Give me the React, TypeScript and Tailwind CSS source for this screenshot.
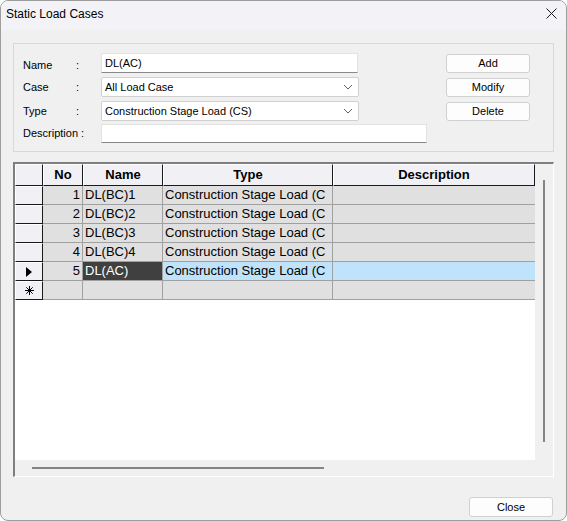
import React from "react";

type Row = { no: number; name: string; type: string; desc: string };

const rows: Row[] = [
  { no: 1, name: "DL(BC)1", type: "Construction Stage Load (C", desc: "" },
  { no: 2, name: "DL(BC)2", type: "Construction Stage Load (C", desc: "" },
  { no: 3, name: "DL(BC)3", type: "Construction Stage Load (C", desc: "" },
  { no: 4, name: "DL(BC)4", type: "Construction Stage Load (C", desc: "" },
  { no: 5, name: "DL(AC)", type: "Construction Stage Load (C", desc: "" },
];

const SELECTED = 5;

function Chevron() {
  return (
    <svg width="10" height="6" viewBox="0 0 10 6" className="shrink-0">
      <path d="M1 1 L5 5 L9 1" fill="none" stroke="#606060" strokeWidth="1" />
    </svg>
  );
}

function FieldRow({
  label,
  colon = true,
  labelClass = "",
  children,
  className = "",
}: {
  label: string;
  colon?: boolean;
  labelClass?: string;
  children: React.ReactNode;
  className?: string;
}) {
  return (
    <div className={`flex items-center ${className}`}>
      {colon ? (
        <>
          <span className={`w-[53px] ${labelClass}`}>{label}</span>
          <span className={`w-[25px] ${labelClass}`}>:</span>
        </>
      ) : (
        <span className={`w-[78px] ${labelClass}`}>{label}</span>
      )}
      {children}
    </div>
  );
}

function WinButton({ children, className = "" }: { children: React.ReactNode; className?: string }) {
  return (
    <button
      type="button"
      className={`flex items-center justify-center rounded-[3px] border border-[#d0d0d0] bg-[#fdfdfd] text-[11px] text-black ${className}`}
    >
      {children}
    </button>
  );
}

function HeaderCell({ w, children }: { w: string; children?: React.ReactNode }) {
  return (
    <div
      className={`${w} flex h-full items-center justify-center border-t border-l border-t-white border-l-white border-r border-b border-r-[#1a1a1a] border-b-[#1a1a1a] bg-[#f0f0f5] font-bold`}
    >
      {children}
    </div>
  );
}

function RowHeader({ marker }: { marker?: "current" | "new" }) {
  return (
    <div className="flex h-full w-[28px] items-center justify-center border-t border-l border-t-white border-l-white border-r border-b border-r-[#1a1a1a] border-b-[#1a1a1a] bg-[#f0f0f5]">
      {marker === "current" && (
        <svg width="6" height="10" viewBox="0 0 6 10">
          <polygon points="0,0 6,5 0,10" fill="#000" />
        </svg>
      )}
      {marker === "new" && (
        <svg width="9" height="9" viewBox="0 0 9 9">
          <g stroke="#000" strokeWidth="1">
            <line x1="4.5" y1="0" x2="4.5" y2="9" />
            <line x1="0" y1="4.5" x2="9" y2="4.5" />
            <line x1="1.3" y1="1.3" x2="7.7" y2="7.7" />
            <line x1="7.7" y1="1.3" x2="1.3" y2="7.7" />
          </g>
        </svg>
      )}
    </div>
  );
}

export default function App() {
  return (
    <div className="h-[521px] w-[567px] overflow-hidden rounded-[8px] border border-[#9e9e9e] bg-[#f0f0f0] font-['Liberation_Sans',Arial,sans-serif] text-black">
      <div className="flex h-[29px] items-center justify-between bg-[#f3f3f7] pb-[4px] pl-[5px] pr-[9px]">
        <span className="text-[12px]">Static Load Cases</span>
        <svg width="11" height="11" viewBox="0 0 11 11">
          <path d="M0.5 0.5 L10.5 10.5 M10.5 0.5 L0.5 10.5" stroke="#1a1a1a" strokeWidth="1" />
        </svg>
      </div>

      <div className="px-[12px] pt-[13px]">
        <div className="flex h-[109px] w-[541px] border border-[#d8d8d8] pl-[9px] pt-[9px] text-[11px]">
          <div className="flex w-[404px] flex-col">
            <FieldRow label="Name" labelClass="pt-[4px]" className="h-[20px]">
              <div className="flex h-[20px] w-[257px] items-center border border-[#e3e3e3] border-b-[#8a8a8a] bg-white px-[3px]">DL(AC)</div>
            </FieldRow>
            <FieldRow label="Case" labelClass="pt-[1px]" className="mt-[4px] h-[20px]">
              <div className="flex h-[20px] w-[258px] items-center justify-between rounded-[2px] border border-[#d0d0d0] bg-white pl-[3px] pr-[5px]">
                <span className="pt-[1px]">All Load Case</span>
                <Chevron />
              </div>
            </FieldRow>
            <FieldRow label="Type" labelClass="pt-[1px]" className="mt-[4px] h-[20px]">
              <div className="flex h-[20px] w-[258px] items-center justify-between rounded-[2px] border border-[#d0d0d0] bg-white pl-[3px] pr-[5px]">
                <span>Construction Stage Load (CS)</span>
                <Chevron />
              </div>
            </FieldRow>
            <FieldRow label="Description :" colon={false} className="mt-[3px] h-[19px]">
              <div className="h-[19px] w-[326px] border border-[#e3e3e3] border-b-[#8a8a8a] bg-white" />
            </FieldRow>
          </div>
          <div className="ml-[19px] mt-[1px] flex w-[84px] flex-col gap-[5px]">
            <WinButton className="h-[19px]">Add</WinButton>
            <WinButton className="h-[19px]">Modify</WinButton>
            <WinButton className="h-[19px]">Delete</WinButton>
          </div>
        </div>

        <div className="mt-[10px] flex h-[315px] w-[541px] border-t-2 border-l-2 border-r border-b border-t-[#7f7f7f] border-l-[#7f7f7f] border-r-white border-b-white text-[13px]">
          <div className="flex w-[520px] flex-col">
            <div className="h-[296px] bg-white">
              <div className="flex h-[22px]">
                <HeaderCell w="w-[28px]" />
                <HeaderCell w="w-[40px]">No</HeaderCell>
                <HeaderCell w="w-[80px]">Name</HeaderCell>
                <HeaderCell w="w-[170px]">Type</HeaderCell>
                <HeaderCell w="w-[202px]">Description</HeaderCell>
              </div>
              {rows.map((row) => {
                const selected = row.no === SELECTED;
                return (
                  <div key={row.no} className="flex h-[19px]">
                    <RowHeader marker={selected ? "current" : undefined} />
                    <div className="flex w-[40px] items-center justify-end border-r border-b border-[#a0a0a0] bg-[#e0e0e0] pr-[2px]">{row.no}</div>
                    <div
                      className={`flex w-[80px] items-center border-r border-b border-[#a0a0a0] pl-[2px] ${
                        selected ? "bg-[#404040] text-white" : "bg-[#e0e0e0]"
                      }`}
                    >
                      {row.name}
                    </div>
                    <div
                      className={`flex w-[170px] items-center overflow-hidden whitespace-nowrap border-r border-b border-[#a0a0a0] pl-[2px] ${
                        selected ? "bg-[#bfe3fb]" : "bg-[#e0e0e0]"
                      }`}
                    >
                      {row.type}
                    </div>
                    <div className={`w-[202px] border-b border-[#a0a0a0] ${selected ? "bg-[#bfe3fb]" : "bg-[#e0e0e0]"}`}>{row.desc}</div>
                  </div>
                );
              })}
              <div className="flex h-[19px]">
                <RowHeader marker="new" />
                <div className="w-[40px] border-r border-b border-[#a0a0a0] bg-[#e0e0e0]" />
                <div className="w-[80px] border-r border-b border-[#a0a0a0] bg-[#e0e0e0]" />
                <div className="w-[170px] border-r border-b border-[#a0a0a0] bg-[#e0e0e0]" />
                <div className="w-[202px] border-b border-[#a0a0a0] bg-[#e0e0e0]" />
              </div>
            </div>
            <div className="h-[16px] pl-[17px] pt-[7px]">
              <div className="h-[2px] w-[292px] bg-[#858585]" />
            </div>
          </div>
          <div className="w-[18px] pl-[8px] pt-[16px]">
            <div className="h-[262px] w-[2px] bg-[#858585]" />
          </div>
        </div>

        <div className="mt-[20px] flex justify-end pr-[1px]">
          <WinButton className="h-[20px] w-[84px]">Close</WinButton>
        </div>
      </div>
    </div>
  );
}
